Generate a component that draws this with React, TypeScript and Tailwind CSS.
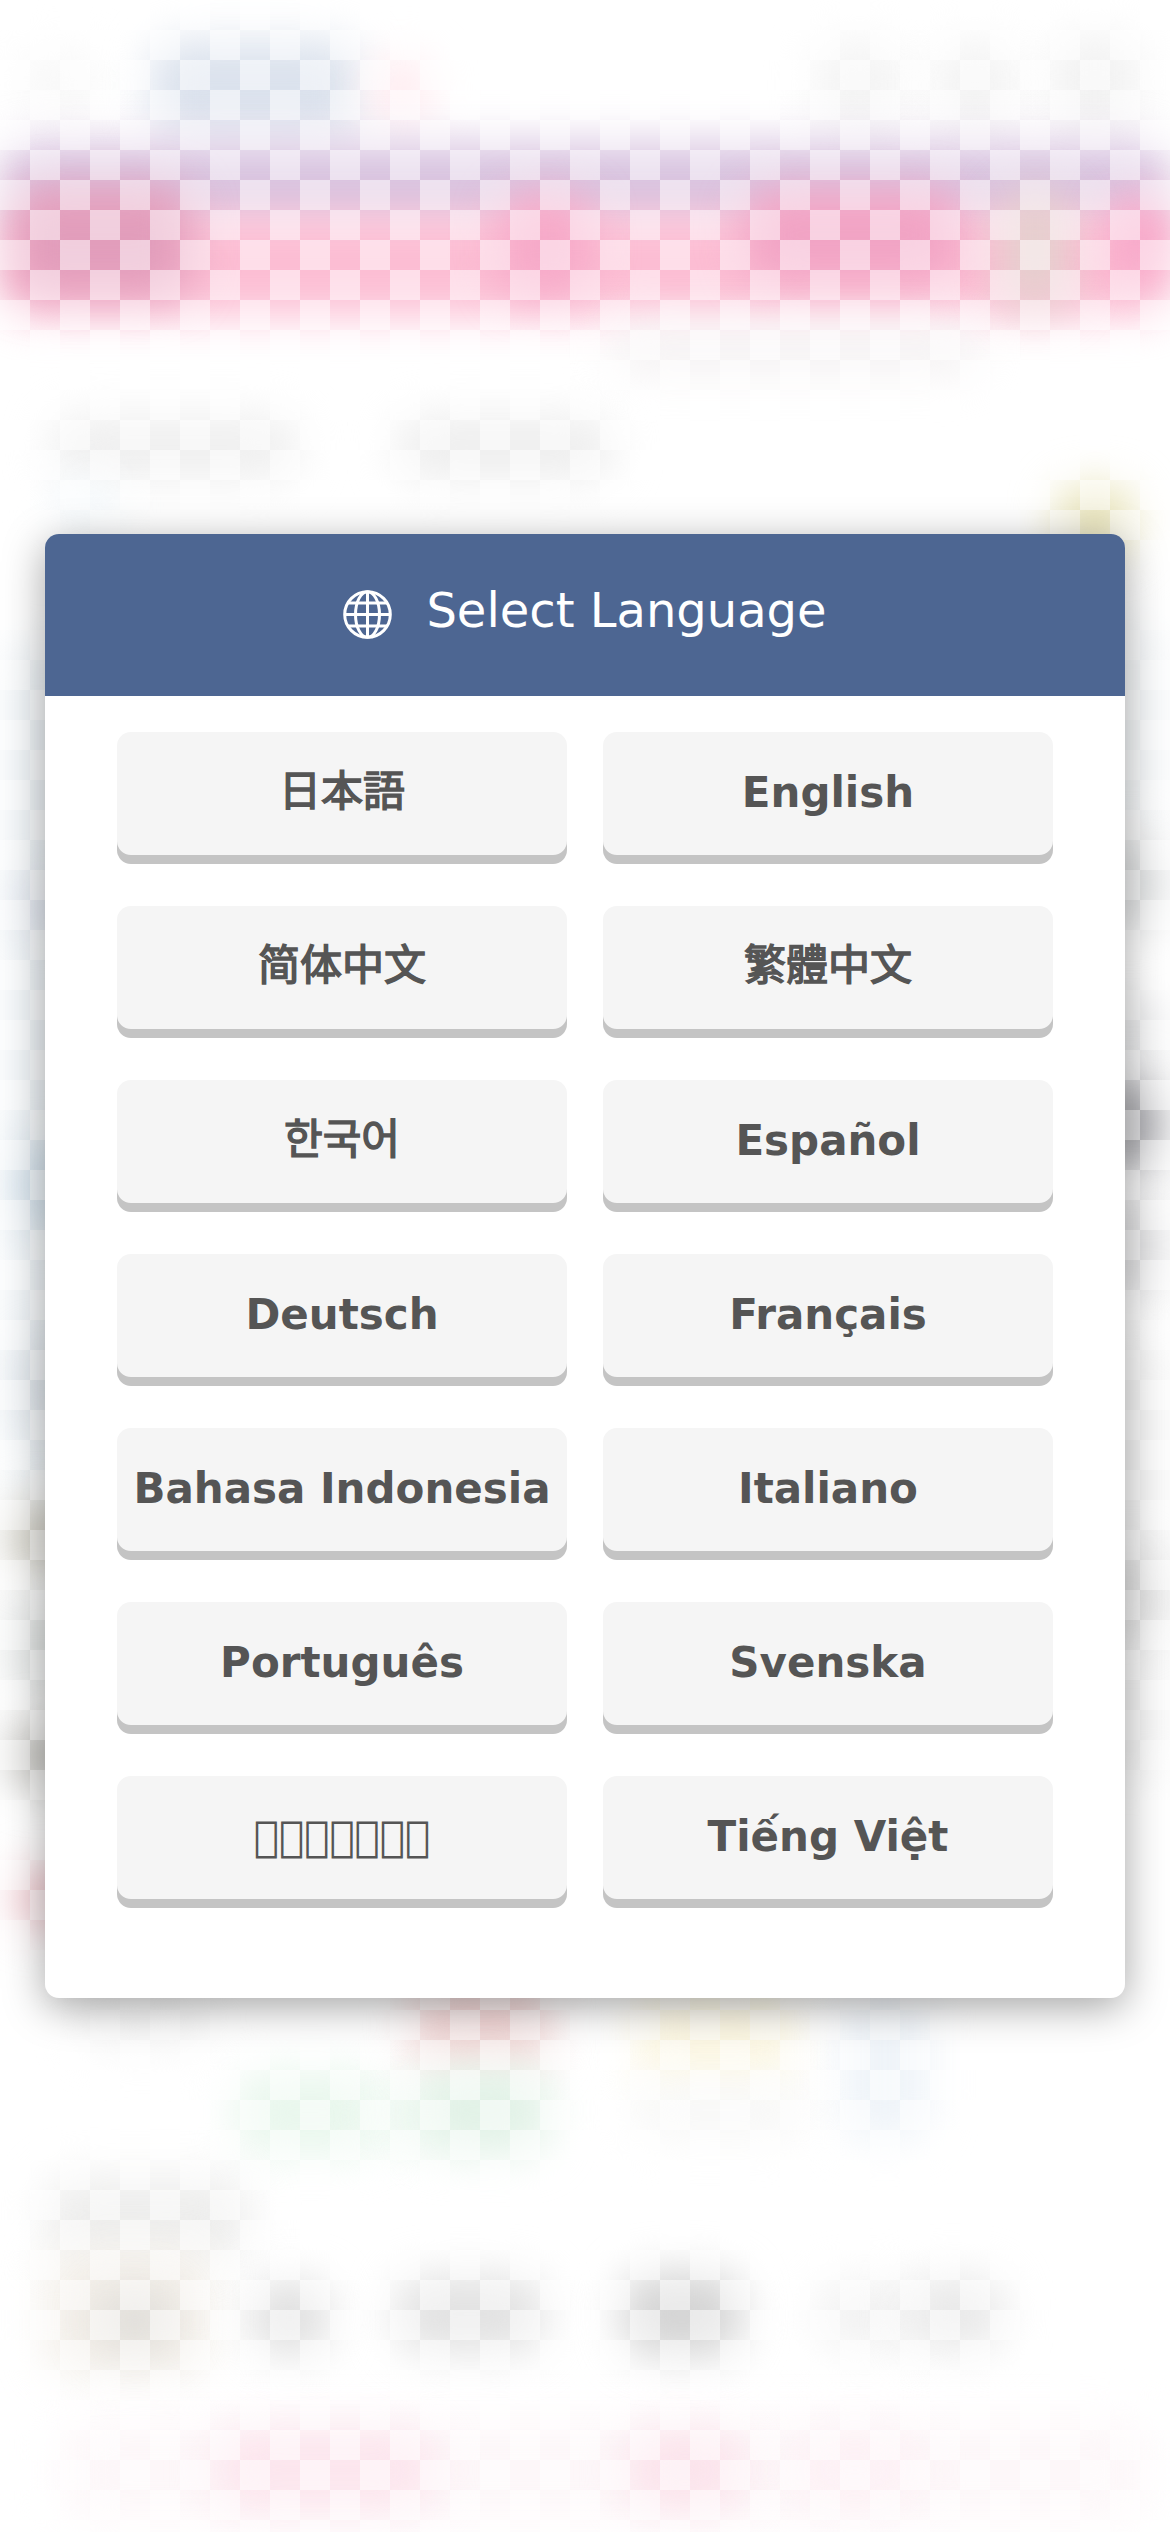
const languages = [
  { code: 'ja', label: '日本語', font: 'pb-1 font-normal [-webkit-text-stroke:1.5px_#555] font-[DejaVu_Sans,Noto_Sans_CJK_JP,sans-serif]' },
  { code: 'en', label: 'English', font: 'pb-0.5 font-bold' },
  { code: 'zh-CN', label: '简体中文', font: 'pb-1 font-normal [-webkit-text-stroke:1.5px_#555] font-[DejaVu_Sans,Noto_Sans_CJK_SC,sans-serif]' },
  { code: 'zh-TW', label: '繁體中文', font: 'pb-1 font-normal [-webkit-text-stroke:1.5px_#555] font-[DejaVu_Sans,Noto_Sans_CJK_TC,sans-serif]' },
  { code: 'ko', label: '한국어', font: 'pb-1 font-normal [-webkit-text-stroke:1.5px_#555] font-[DejaVu_Sans,Noto_Sans_CJK_KR,sans-serif]' },
  { code: 'es', label: 'Español', font: 'pb-0.5 font-bold' },
  { code: 'de', label: 'Deutsch', font: 'pb-0.5 font-bold' },
  { code: 'fr', label: 'Français', font: 'pb-0.5 font-bold' },
  { code: 'id', label: 'Bahasa Indonesia', font: 'pb-0.5 font-bold' },
  { code: 'it', label: 'Italiano', font: 'pb-0.5 font-bold' },
  { code: 'pt', label: 'Português', font: 'pb-0.5 font-bold' },
  { code: 'sv', label: 'Svenska', font: 'pb-0.5 font-bold' },
  { code: 'th', label: '\uE900\uE901\uE902\uE903\uE904\uE905\uE906', font: 'pb-0.5 font-bold' },
  { code: 'vi', label: 'Tiếng Việt', font: 'pb-0.5 font-bold' },
];

// Soft colour patches behind the dialog: left, top, width, height, colour.
const patches: [number, number, number, number, string][] = [
  [150, 40, 210, 95, '#dbe2ed'],
  [370, 55, 60, 70, '#ffeaef'],
  [20, 50, 80, 70, '#f8f8f8'],
  [815, 40, 90, 90, '#f4f4f4'],
  [935, 40, 80, 90, '#f3f3f3'],
  [1050, 35, 90, 95, '#f2f2f2'],
  [0, 142, 1170, 88, '#d8c4e0'],
  [0, 212, 1170, 104, '#fcbdd3'],
  [10, 185, 180, 112, '#e29dbb'],
  [500, 195, 90, 100, '#f6a9c8'],
  [745, 190, 215, 90, '#f1a3c4'],
  [1000, 190, 70, 120, '#e4d0ce'],
  [1110, 195, 60, 90, '#f7a6c8'],
  [610, 325, 370, 50, '#f5f2f3'],
  [50, 415, 250, 65, '#efefef'],
  [395, 415, 220, 65, '#eeeeee'],
  [50, 480, 70, 50, '#f4f9fc'],
  [1055, 485, 80, 70, '#e8e3b8'],
  [12, 640, 60, 860, '#ebf1f5'],
  [20, 880, 50, 50, '#dbe0ec'],
  [20, 1140, 50, 90, '#cddde9'],
  [20, 1340, 50, 90, '#dce2e8'],
  [10, 1500, 60, 75, '#c9c7bc'],
  [10, 1590, 60, 110, '#dfe2e1'],
  [10, 1720, 60, 70, '#bdbcb7'],
  [15, 1865, 60, 65, '#f0c3ca'],
  [1100, 620, 60, 210, '#f3f6f8'],
  [1100, 835, 60, 95, '#dadcdd'],
  [1100, 1000, 60, 60, '#e3e4e6'],
  [1100, 1075, 60, 98, '#a1a1a6'],
  [1100, 1190, 60, 110, '#dcdcde'],
  [1100, 1330, 60, 450, '#f2f2f2'],
  [1100, 1550, 60, 90, '#dedede'],
  [80, 1985, 130, 65, '#f6f6f6'],
  [410, 1980, 140, 90, '#f2d6d6'],
  [635, 1990, 160, 95, '#fcf7e3'],
  [840, 1990, 90, 150, '#eff4f9'],
  [235, 2070, 150, 85, '#e9f7ed'],
  [370, 2085, 60, 65, '#f0faf3'],
  [415, 2065, 135, 90, '#e2f2e7'],
  [630, 2080, 180, 60, '#f8f8f7'],
  [45, 2175, 205, 85, '#eeeeed'],
  [45, 2250, 165, 125, '#f3efe9'],
  [95, 2290, 80, 60, '#dfddd9'],
  [250, 2280, 80, 75, '#dfdfdf'],
  [395, 2275, 150, 78, '#e2e2e2'],
  [622, 2272, 120, 84, '#d4d4d4'],
  [815, 2280, 100, 70, '#f2f2f2'],
  [905, 2275, 100, 76, '#e9e9e9'],
  [60, 2420, 1090, 100, '#fdf7f9'],
  [215, 2430, 220, 80, '#fce5ed'],
  [625, 2430, 120, 80, '#fbe3eb'],
  [790, 2430, 130, 80, '#fdf1f5'],
];

function Backdrop() {
  return (
    <div className="absolute inset-0 overflow-hidden" aria-hidden="true">
      {patches.map(([left, top, width, height, backgroundColor]) => (
        <div
          key={`${left}-${top}`}
          className="absolute rounded-[30px] blur-[22px]"
          style={{ left, top, width, height, backgroundColor }}
        />
      ))}
      <div className="absolute inset-0 bg-[conic-gradient(transparent_25%,rgba(255,255,255,0.5)_0_50%,transparent_0_75%,rgba(255,255,255,0.5)_0)] bg-[length:60px_60px]" />
    </div>
  );
}

function GlobeIcon() {
  return (
    <svg className="mt-2 size-[49px]" viewBox="0 0 49 49" fill="none" stroke="currentColor" strokeWidth="3">
      <circle cx="24.5" cy="24.5" r="22.8" />
      <ellipse cx="24.5" cy="24.5" rx="12" ry="22.8" />
      <path d="M24.5 1.7v45.6M1.7 24.5h45.6M5 13h39M5 36h39" />
    </svg>
  );
}

export default function App() {
  return (
    <main className="relative flex h-[2532px] w-[1170px] flex-col items-center overflow-hidden bg-white pt-[534px] font-[DejaVu_Sans,sans-serif]">
      <Backdrop />
      <section className="relative h-[1464px] w-[1080px] overflow-visible rounded-[14px] bg-white shadow-[0_9px_42px_rgba(0,0,0,0.36)]">
        <header className="flex h-[162px] items-center justify-center gap-[34px] rounded-t-[14px] bg-[#4d6692] pb-2.5 text-white">
          <GlobeIcon />
          <h1 className="text-[48px] leading-[72px] font-normal">Select Language</h1>
        </header>
        <div className="grid grid-cols-2 gap-x-9 gap-y-[51px] px-[72px] pt-9">
          {languages.map(({ code, label, font }) => (
            <button
              key={code}
              lang={code}
              className={`h-[123px] rounded-[14px] bg-[#f5f5f5] text-[42px] leading-[63px] whitespace-nowrap text-[#555] shadow-[0_9px_0_#c4c4c4] ${font}`}
            >
              {label}
            </button>
          ))}
        </div>
      </section>
    </main>
  );
}
